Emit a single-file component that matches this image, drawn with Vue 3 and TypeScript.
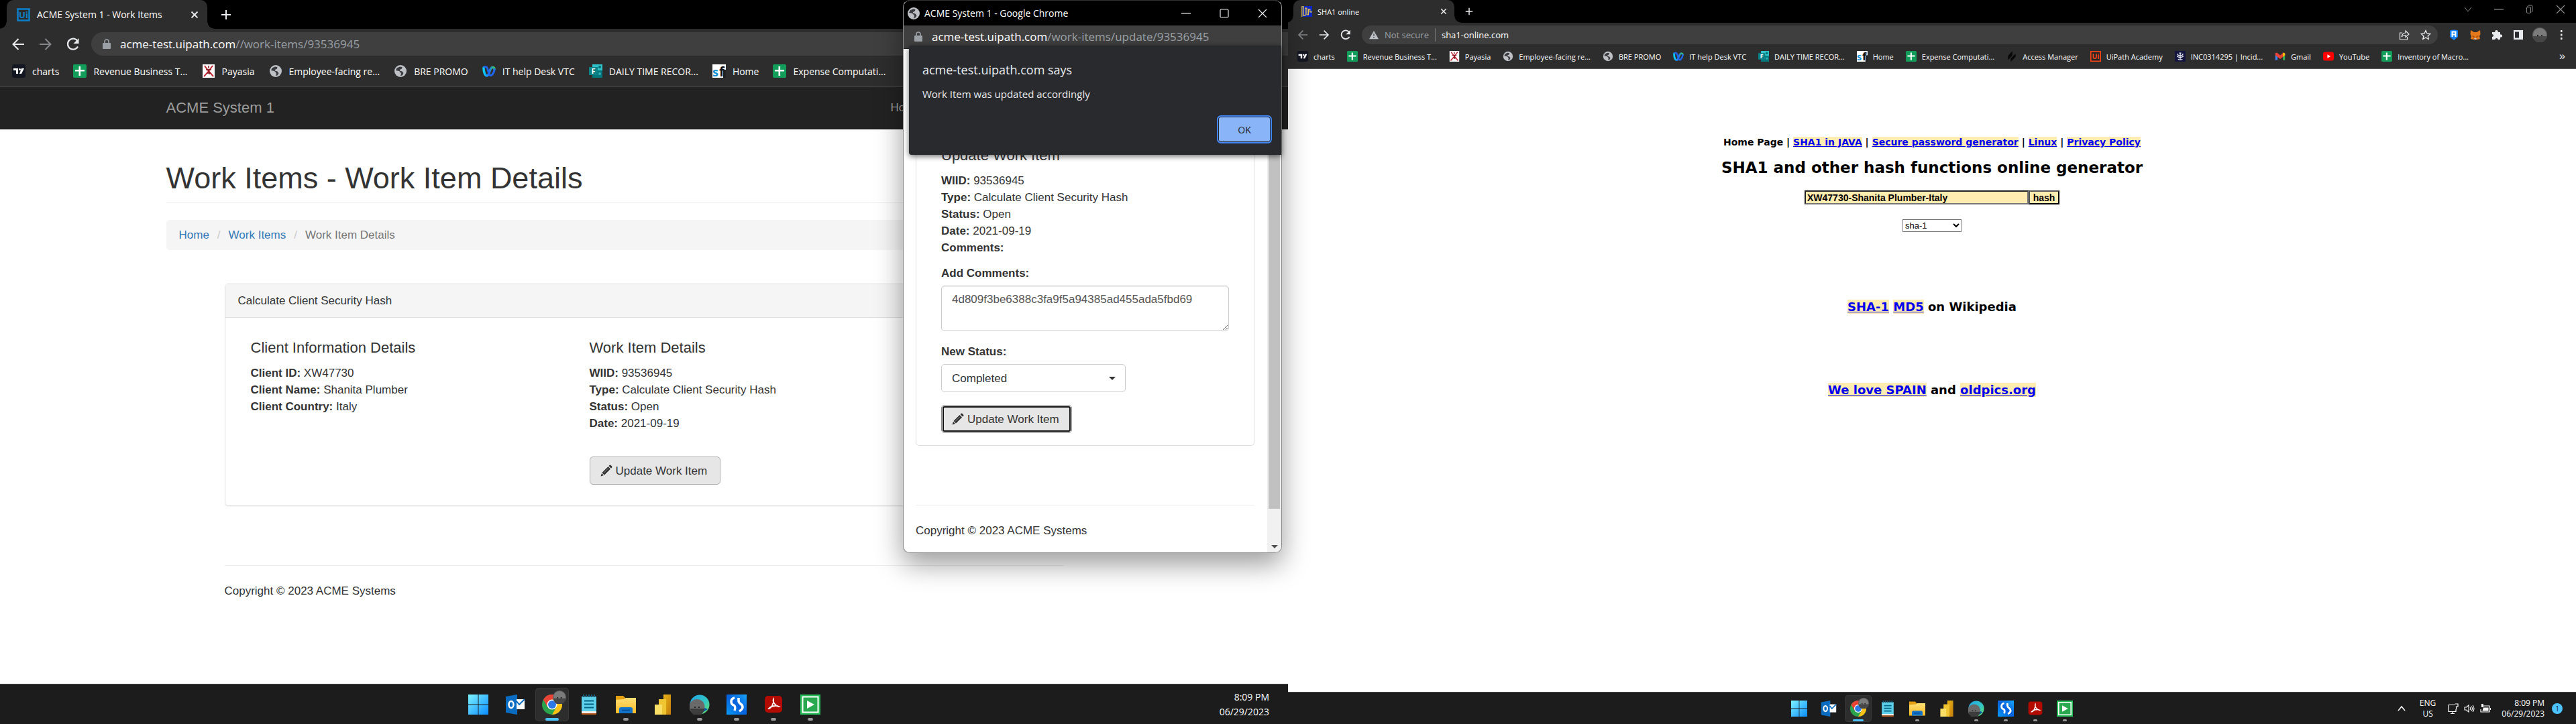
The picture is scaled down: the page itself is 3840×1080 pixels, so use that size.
<script setup lang="ts">
import { ref } from 'vue'

interface Item {
  icon: string
  label: string
}

interface App {
  icon: string
  name: string
  state: 'idle' | 'open' | 'active'
}

const bookmarks: Item[] = [
  { icon: 'charts', label: 'charts' },
  { icon: 'sheet', label: 'Revenue Business T...' },
  { icon: 'payasia', label: 'Payasia' },
  { icon: 'globe', label: 'Employee-facing re...' },
  { icon: 'globe', label: 'BRE PROMO' },
  { icon: 'webex', label: 'IT help Desk VTC' },
  { icon: 'forms', label: 'DAILY TIME RECOR...' },
  { icon: 'sf', label: 'Home' },
  { icon: 'sheet', label: 'Expense Computati...' },
]

const moreBookmarks: Item[] = [
  { icon: 'access', label: 'Access Manager' },
  { icon: 'academy', label: 'UiPath Academy' },
  { icon: 'crown', label: 'INC0314295 | Incid...' },
  { icon: 'gmail', label: 'Gmail' },
  { icon: 'youtube', label: 'YouTube' },
  { icon: 'sheet', label: 'Inventory of Macro...' },
]

const apps: App[] = [
  { icon: 'windows', name: 'Start', state: 'idle' },
  { icon: 'outlook', name: 'Outlook', state: 'idle' },
  { icon: 'chrome', name: 'Chrome', state: 'active' },
  { icon: 'notepad', name: 'Notepad', state: 'idle' },
  { icon: 'explorer', name: 'File Explorer', state: 'open' },
  { icon: 'powerbi', name: 'Power BI', state: 'idle' },
  { icon: 'edge', name: 'Edge', state: 'open' },
  { icon: 'studio', name: 'Studio', state: 'open' },
  { icon: 'acrobat', name: 'Acrobat', state: 'open' },
  { icon: 'assistant', name: 'Assistant', state: 'open' },
]

const comments = ref('4d809f3be6388c3fa9f5a94385ad455ada5fbd69')
const status = ref('Completed')
const plain = ref('XW47730-Shanita Plumber-Italy')
const algorithm = ref('sha-1')
</script>

<template>
  <svg class="paints" aria-hidden="true">
    <defs>
      <linearGradient id="g-win" x1="0" y1="0" x2="1" y2="1"><stop offset="0" stop-color="#7df3ff" /><stop offset="1" stop-color="#0a8cff" /></linearGradient>
      <linearGradient id="g-folder" x1="0" y1="0" x2="0" y2="1"><stop offset="0" stop-color="#ffdf74" /><stop offset="1" stop-color="#fdbb25" /></linearGradient>
      <linearGradient id="g-edge" x1="0" y1="0" x2="1" y2="1"><stop offset="0" stop-color="#1fa2e8" /><stop offset=".6" stop-color="#35c9c0" /><stop offset="1" stop-color="#6be04f" /></linearGradient>
      <linearGradient id="g-studio" x1="0" y1="1" x2="1" y2="0"><stop offset="0" stop-color="#0a9cf5" /><stop offset=".5" stop-color="#0560dd" /><stop offset="1" stop-color="#19a6fa" /></linearGradient>
      <linearGradient id="g-webex" x1="0" y1="0" x2="1" y2="0"><stop offset="0" stop-color="#0ad3ff" /><stop offset=".5" stop-color="#1f6dff" /><stop offset="1" stop-color="#39d45c" /></linearGradient>
      <linearGradient id="g-bi" x1="0" y1="0" x2="1" y2="1"><stop offset="0" stop-color="#e8b417" /><stop offset="1" stop-color="#c57d0c" /></linearGradient>
    </defs>
  </svg>
  <svg class="sprite" aria-hidden="true">
    <symbol id="i-charts" viewBox="0 0 20 20"><rect width="20" height="20" rx="3" fill="#131722" /><path d="M2 6h7v8H6V9H2zM14 6h4l-4 8h-3z" fill="#fff" /><circle cx="11.500" cy="7.500" r="1.500" fill="#fff" /></symbol>
    <symbol id="i-sheet" viewBox="0 0 20 20"><rect width="20" height="20" rx="2" fill="#129d5b" /><path d="M8.500 3h2.600v5H17v2.600h-5.900V17H8.500v-6.400H3V8h5.500z" fill="#fff" /></symbol>
    <symbol id="i-payasia" viewBox="0 0 20 20"><path d="M1 0h18v20H1z" fill="#fff" /><path d="M4 2c3 5 8 10 13 16M16 2C12 8 8 13 3 18" fill="none" stroke="#c32a35" stroke-width="2" /><path d="M10 2v4M6 8h8M8 13h5M10 9l1 6" stroke="#7f1722" stroke-width="1.500" /></symbol>
    <symbol id="i-globe" viewBox="0 0 20 20"><circle cx="10" cy="10" r="9" fill="#bdc1c6" /><path d="M9 3.500 4.500 5.500 3 9l5 1 2 2 1 2-1 3.500L13 16l1.500-3-2-2.500-3.500-1L9 8l3-1.500L12.500 4z" fill="#3a3b3e" /></symbol>
    <symbol id="i-webex" viewBox="0 0 20 20"><path d="M2 5c0 7 2 12 5 12s3-7 6-11c2-3 5-1 5 1" fill="none" stroke="url(#g-webex)" stroke-width="3.500" stroke-linecap="round" /><path d="M3 4c4-2 5 3 6 7s3 7 5 5c3-3 4-6 4-9" fill="none" stroke="#2165ee" stroke-width="3" stroke-linecap="round" /></symbol>
    <symbol id="i-forms" viewBox="0 0 20 20"><path d="M5 0h15v11H5z" fill="#2fc3c9" /><path d="M5 9h15v11H5z" fill="#04777d" /><circle cx="16" cy="4" r="2" fill="#096c72" /><circle cx="16" cy="14" r="2" fill="#32aeb5" /><path d="M0 4h13v12H0z" fill="#0c8288" /><text x="6.500" y="14" text-anchor="middle" font-size="11" font-weight="700" font-family="Open Sans, sans-serif" fill="#fff">F</text></symbol>
    <symbol id="i-sf" viewBox="0 0 20 20"><path d="M0 0h20v20H0z" fill="#fff" /><path d="M16 8h4v12h-4z" fill="#222" /><text x="0" y="18" font-size="18" font-weight="700" font-family="Open Sans, sans-serif" fill="#1291d6">s</text><text x="10" y="18" font-size="20" font-weight="700" font-family="Open Sans, sans-serif" fill="#101010">f</text></symbol>
    <symbol id="i-access" viewBox="0 0 20 20"><path d="M11 0 3 9v8l8-9zM17 5l-9 9v6l9-9z" fill="#080808" /></symbol>
    <symbol id="i-academy" viewBox="0 0 20 20"><path d="M1 1h18v18H1z" fill="#252525" stroke="#fa4616" stroke-width="2" /><text x="10" y="15" text-anchor="middle" font-size="13" font-weight="700" font-family="Open Sans, sans-serif" fill="#fa4616">Ui</text></symbol>
    <symbol id="i-crown" viewBox="0 0 20 20"><path d="M0 0h20v20H0z" fill="#14163f" /><path d="M10 3v14M5 5c0 5 10 5 10 0M4 9c2 4 10 4 12 0M6 15c1 2 7 2 8 0M8 4h4" fill="none" stroke="#eceef8" stroke-width="1.600" /></symbol>
    <symbol id="i-gmail" viewBox="0 0 20 20"><path d="M1 4h4v13H1z" fill="#4285f4" /><path d="M15 4h4v13h-4z" fill="#34a853" /><path d="m1 4 3-1 6 5 6-5 3 1v4l-9 7-9-7z" fill="#ea4335" /><path d="m15 4 2-1 2 2v3l-4 3z" fill="#fbbc04" /></symbol>
    <symbol id="i-youtube" viewBox="0 0 20 20"><rect y="2" width="20" height="16" rx="4" fill="#f00" /><path d="m8 6.500 6 3.500-6 3.500z" fill="#fff" /></symbol>

    <symbol id="i-uipath" viewBox="0 0 20 20"><path d="M1.500 1.500h17v17h-17z" fill="#2b2c2e" stroke="#0b80c9" stroke-width="2.500" /><text x="10" y="15" text-anchor="middle" font-size="13" font-weight="700" font-family="Open Sans, sans-serif" fill="#0b84cf">Ui</text></symbol>
    <symbol id="i-wave" viewBox="0 0 20 20"><path d="M1 0h19v20H1z" fill="#0b28c4" /><path d="M1 20V1h3v17h3V4h3v12h3V6h3v5h4" fill="none" stroke="#e8c548" stroke-width="1.500" /></symbol>

    <symbol id="i-back" viewBox="0 0 20 20"><path d="M19 10H3M10.500 2 2.500 10l8 8" fill="none" stroke="currentColor" stroke-width="2" /></symbol>
    <symbol id="i-forward" viewBox="0 0 20 20"><path d="M1 10h16M9.500 2l8 8-8 8" fill="none" stroke="currentColor" stroke-width="2" /></symbol>
    <symbol id="i-reload" viewBox="0 0 20 20"><path d="M17 13.500A8 8 0 1 1 16.500 5" fill="none" stroke="currentColor" stroke-width="2.200" /><path d="M18.500 1v8h-8z" fill="currentColor" /></symbol>
    <symbol id="i-lock" viewBox="0 0 12 16"><path d="M1 6h10q1 0 1 1v7q0 1-1 1H1q-1 0-1-1V7q0-1 1-1z" fill="currentColor" /><path d="M3 7V4a3 3 0 0 1 6 0v3" fill="none" stroke="currentColor" stroke-width="1.600" /></symbol>
    <symbol id="i-warning" viewBox="0 0 16 16"><path d="m8 1 8 14H0z" fill="currentColor" /><path d="M8 6v4M8 11.500v2" stroke="#3c3c3c" stroke-width="1.500" /></symbol>
    <symbol id="i-close" viewBox="0 0 12 12"><path d="m1.500 1.500 9 9M10.500 1.500l-9 9" stroke="currentColor" stroke-width="1.800" /></symbol>
    <symbol id="i-thin-close" viewBox="0 0 14 14"><path d="m1 1 12 12M13 1 1 13" stroke="currentColor" stroke-width="1.200" /></symbol>
    <symbol id="i-minimise" viewBox="0 0 14 14"><path d="M0 7h14" stroke="currentColor" stroke-width="1.200" /></symbol>
    <symbol id="i-maximise" viewBox="0 0 14 14"><rect x="1" y="1" width="12" height="12" rx="1.500" fill="none" stroke="currentColor" stroke-width="1.200" /></symbol>
    <symbol id="i-restore" viewBox="0 0 14 14"><path d="M4 3V2.500Q4 1 5.500 1h4Q11 1 11 2.500v7Q11 11 9.500 11" fill="none" stroke="currentColor" /><rect x="2.500" y="3.500" width="6" height="9" rx="1.500" fill="none" stroke="currentColor" /></symbol>
    <symbol id="i-down" viewBox="0 0 14 14"><path d="m2 4 5 6 5-6" fill="none" stroke="currentColor" /></symbol>
    <symbol id="i-up" viewBox="0 0 14 14"><path d="m2 10 5-6 5 6" fill="none" stroke="currentColor" stroke-width="1.500" /></symbol>
    <symbol id="i-plus" viewBox="0 0 16 16"><path d="M8 1v14M1 8h14" stroke="currentColor" stroke-width="2" /></symbol>
    <symbol id="i-share" viewBox="0 0 16 16"><path d="M5 5H1.500v10h11v-4M4 11c1-5 4-6 6-6V2l5 5-5 4.500V8.500c-3 0-5 1-6 2.500z" fill="none" stroke="currentColor" stroke-width="1.200" /></symbol>
    <symbol id="i-star" viewBox="0 0 16 16"><path d="m8 1.500 2 4.500 4.800.5-3.600 3.200 1 4.800L8 12l-4.200 2.500 1-4.800L1.200 6.500 6 6z" fill="none" stroke="currentColor" stroke-width="1.300" /></symbol>
    <symbol id="i-ronin" viewBox="0 0 16 16"><path d="M2 1.500Q8-.5 14 1.500V11L8 16l-6-5z" fill="#1680f5" /><path d="M5.500 11V3.500h5v4h-5M10.500 7.500V11" fill="none" stroke="#fff" stroke-width="2" /></symbol>
    <symbol id="i-fox" viewBox="0 0 16 16"><path d="m1 1 5 3h4l5-3 .5 6-1.500 3 1 4-4 1H5l-4-1 1-4L.5 7z" fill="#e57a1d" /><path d="m3 9 4 1-1 3zM13 9l-4 1 1 3z" fill="#a84f12" /><path d="M6 13h4l-1 2H7z" fill="#d6c0b3" /></symbol>
    <symbol id="i-puzzle" viewBox="0 0 16 16"><path d="M1 4h4.500a2.200 2.200 0 1 1 4 0H13v3.500a2.200 2.200 0 1 1 0 4V15H9.500a2 2 0 1 0-4 0H1v-4a2 2 0 1 0 0-4z" fill="currentColor" /></symbol>
    <symbol id="i-panel" viewBox="0 0 16 16"><path d="M1 1h14v14H1z" fill="#e8eaed" /><path d="M3 3.500h6v9H3z" fill="#29292b" /></symbol>
    <symbol id="i-avatar" viewBox="0 0 22 22"><circle cx="11" cy="11" r="11" fill="#5d5d5d" /><circle cx="11" cy="11" r="10" fill="#7b7b7b" /><path d="M1 13h20a10 10 0 0 1-20 0z" fill="#474747" /><path d="M7 12h2M13 12h2" stroke="#222" stroke-width="2" /></symbol>
    <symbol id="i-dots" viewBox="0 0 16 16"><path d="M7 1h2.500v3H7zM7 6.500h2.500v3H7zM7 12h2.500v3H7z" fill="currentColor" /></symbol>
    <symbol id="i-pencil" viewBox="0 0 18 18"><path d="m11.500 3 3.500 3.500L6 15.500 2.500 12zM12.500 2l1-1q1-1 2 0l1.500 1.500q1 1 0 2l-1 1zM2 13l3 3-4.500 1.500z" fill="#2e2e2e" /><path d="m5 12.500 7-7" stroke="#9b9b9b" /></symbol>

    <symbol id="i-windows" viewBox="0 0 30 30"><path d="M0 0h14.500v14.500H0zM15.500 0H30v14.500H15.500zM0 15.500h14.500V30H0zM15.500 15.500H30V30H15.500z" fill="url(#g-win)" /></symbol>
    <symbol id="i-outlook" viewBox="0 0 30 30"><path d="M1 3 18 0v30L1 27z" fill="#0a6cc0" /><path d="M17 7h12v15H17z" fill="#fff" /><path d="m17 10 4 5 8-8" fill="none" stroke="#0a6cc0" stroke-width="2" /><ellipse cx="9" cy="15" rx="3.500" ry="5" fill="none" stroke="#fff" stroke-width="2.500" /></symbol>
    <symbol id="i-chrome" viewBox="0 0 30 30"><circle cx="15" cy="15" r="15" fill="#2ba24c" /><path d="M2 7.500a15 15 0 0 1 26 0H15L8.500 18.800z" fill="#ea4335" /><path d="M28 7.500A15 15 0 0 1 15 30l6.500-11.200L22 7.500z" fill="#fbc116" /><path d="M2 7.500 8.500 18.800 15 15V7.500z" fill="#ea4335" /><circle cx="15" cy="15" r="7.500" fill="#fff" /><circle cx="15" cy="15" r="6" fill="#2b79e8" /></symbol>
    <symbol id="i-notepad" viewBox="0 0 30 30"><path d="M4 3h22v23H4z" fill="#5fd0ea" /><path d="M4 25h22v3H4z" fill="#f2efea" /><path d="M4 28h22v2H4z" fill="#b4571a" /><path d="M7 0v4M11 0v4M15 0v4M19 0v4M23 0v4" stroke="#1a5e78" stroke-width="2" /><path d="M8 9.500h14M8 14.500h14M8 19.500h14" stroke="#046588" stroke-width="2" /></symbol>
    <symbol id="i-explorer" viewBox="0 0 30 30"><path d="M0 2h11l3 3v8H0z" fill="#e5a012" /><path d="M0 8 12 7l3-2h15v23H0z" fill="url(#g-folder)" /><path d="M5 28v-6q0-3 3-3h14q3 0 3 3v6z" fill="#1173ca" /><path d="M9 23.500h12" stroke="#084b8c" stroke-width="1.500" /></symbol>
    <symbol id="i-powerbi" viewBox="0 0 30 30"><path d="M16 0h11v30H16z" fill="url(#g-bi)" /><path d="M9 7h11v23H9z" fill="#efc632" /><path d="M3 15h11v15H3z" fill="#f9df66" /></symbol>
    <symbol id="i-edge" viewBox="0 0 30 30"><circle cx="15" cy="15" r="14.500" fill="url(#g-edge)" /><path d="M5 25q10 6 22-3l-4-2z" fill="#0c58a8" /><circle cx="11" cy="18.500" r="11.500" fill="#6a6a6a" /><path d="M1 21h21a10 10 0 0 1-21 0z" fill="#3d3d3d" /><path d="M7 19h2M13 19h2" stroke="#222" stroke-width="2" /></symbol>
    <symbol id="i-studio" viewBox="0 0 30 30"><path d="M0 0h30v30H0z" fill="url(#g-studio)" /><path d="M12 5q-5 1-5 5.500T11 16q3 2 1 8M18 5v4q0 3 3 5t3 5-5 6" fill="none" stroke="#fff" stroke-width="3.500" /></symbol>
    <symbol id="i-acrobat" viewBox="0 0 30 30"><rect x="2" y="2" width="26" height="25" rx="5" fill="#b30b00" /><path d="M8 21c3 0 8-7 7-14-2 4 4 11 8 11-3-2-12-1-15 3z" fill="none" stroke="#fff" stroke-width="1.800" /></symbol>
    <symbol id="i-assistant" viewBox="0 0 30 30"><path d="M0 0h30v30H0z" fill="#26bc57" /><path d="M3.500 3.500h23v23h-23z" fill="#28a950" stroke="#fff" stroke-width="2" /><path d="m10 9 11 6-11 6z" fill="#fff" /></symbol>
    <symbol id="i-monitor" viewBox="0 0 16 16"><path d="M11 2.500H1v10h11V9M4 15.500h6M7 12.500v3M11 1h4v4h-2.500v4" fill="none" stroke="currentColor" stroke-width="1.200" /></symbol>
    <symbol id="i-sound" viewBox="0 0 16 16"><path d="M1 6h2.500L7 3v10l-3.500-3H1zM9 6q1.500 2 0 4M11 4.500q3 3.500 0 7M13 3q4 5 0 10" fill="none" stroke="currentColor" stroke-width="1.100" /></symbol>
    <symbol id="i-battery" viewBox="0 0 16 16"><path d="M5 4h9v9H1V9" fill="none" stroke="currentColor" stroke-width="1.200" /><path d="M5 6.500h7.500v5H3.500zM15 7h1v3h-1zM2 1h3v5H2z" fill="currentColor" /></symbol>
  </svg>

  <main class="desktop">
    <section class="screen screen-large">
      <div class="tab-strip">
        <div class="tab">
          <svg class="ico"><use href="#i-uipath" /></svg>
          <span class="tab-title">ACME System 1 - Work Items</span>
          <button class="bare" aria-label="Close tab"><svg class="ico-close"><use href="#i-close" /></svg></button>
        </div>
        <button class="bare new-tab" aria-label="New tab"><svg class="ico-plus"><use href="#i-plus" /></svg></button>
      </div>
      <div class="toolbar">
        <button class="bare" aria-label="Back"><svg class="ico"><use href="#i-back" /></svg></button>
        <button class="bare off" aria-label="Forward"><svg class="ico"><use href="#i-forward" /></svg></button>
        <button class="bare" aria-label="Reload"><svg class="ico"><use href="#i-reload" /></svg></button>
        <div class="address">
          <svg class="ico-lock"><use href="#i-lock" /></svg>
          <span class="url"><b>acme-test.uipath.com</b>//work-items/93536945</span>
        </div>
      </div>
      <nav class="bookmarks" aria-label="Bookmarks">
        <a v-for="b in bookmarks" :key="b.label" href="#" class="bookmark"><svg class="ico"><use :href="'#i-' + b.icon" /></svg>{{ b.label }}</a>
      </nav>

      <header class="navbar">
        <div class="container navbar-row">
          <a href="#" class="brand">ACME System 1</a>
          <nav class="navbar-links"><a href="#">Home</a></nav>
        </div>
      </header>
      <div class="container page">
        <h1>Work Items - Work Item Details</h1>
        <nav class="breadcrumb" aria-label="Breadcrumb">
          <a href="#">Home</a><i>/</i><a href="#">Work Items</a><i>/</i><span>Work Item Details</span>
        </nav>
        <div class="narrow">
          <section class="panel">
            <div class="panel-heading">Calculate Client Security Hash</div>
            <div class="panel-body">
              <div class="column">
                <h4>Client Information Details</h4>
                <p><b>Client ID:</b> XW47730</p>
                <p><b>Client Name:</b> Shanita Plumber</p>
                <p><b>Client Country:</b> Italy</p>
              </div>
              <div class="column">
                <h4>Work Item Details</h4>
                <p><b>WIID:</b> 93536945</p>
                <p><b>Type:</b> Calculate Client Security Hash</p>
                <p><b>Status:</b> Open</p>
                <p><b>Date:</b> 2021-09-19</p>
                <button class="btn btn-spaced"><svg class="ico-pencil"><use href="#i-pencil" /></svg>Update Work Item</button>
              </div>
            </div>
          </section>
          <footer class="copyright">Copyright © 2023 ACME Systems</footer>
        </div>
      </div>

      <footer class="taskbar">
        <div></div>
        <div class="apps">
          <button v-for="a in apps" :key="a.name" class="app" :class="a.state" :aria-label="a.name">
            <svg class="ico-app"><use :href="'#i-' + a.icon" /></svg>
            <svg v-if="a.icon === 'chrome'" class="app-badge"><use href="#i-avatar" /></svg>
          </button>
        </div>
        <div class="tray"><div class="clock">8:09 PM<br />06/29/2023</div></div>
      </footer>

      <section class="popup">
        <div class="popup-title">
          <svg class="ico"><use href="#i-globe" /></svg>
          <span>ACME System 1 - Google Chrome</span>
          <div class="popup-controls">
            <button class="bare" aria-label="Minimise"><svg class="ico-win"><use href="#i-minimise" /></svg></button>
            <button class="bare" aria-label="Maximise"><svg class="ico-win"><use href="#i-maximise" /></svg></button>
            <button class="bare" aria-label="Close"><svg class="ico-win"><use href="#i-thin-close" /></svg></button>
          </div>
        </div>
        <div class="popup-address">
          <svg class="ico-lock"><use href="#i-lock" /></svg>
          <span class="url"><b>acme-test.uipath.com</b>/work-items/update/93536945</span>
        </div>
        <div class="popup-body">
          <div class="popup-page">
            <form class="update" @submit.prevent>
              <h4>Update Work Item</h4>
              <p><b>WIID:</b> 93536945</p>
              <p><b>Type:</b> Calculate Client Security Hash</p>
              <p><b>Status:</b> Open</p>
              <p><b>Date:</b> 2021-09-19</p>
              <p><b>Comments:</b></p>
              <label for="comments">Add Comments:</label>
              <textarea id="comments" v-model="comments"></textarea>
              <label for="status">New Status:</label>
              <div class="picker">
                <select id="status" v-model="status"><option>Open</option><option>Completed</option></select>
              </div>
              <button class="btn btn-focus"><svg class="ico-pencil"><use href="#i-pencil" /></svg>Update Work Item</button>
            </form>
            <footer class="copyright">Copyright © 2023 ACME Systems</footer>
          </div>
          <div class="scrollbar"><div class="thumb"></div><div class="arrow"></div></div>
        </div>
        <div class="alert" role="alertdialog" aria-labelledby="alert-title">
          <div id="alert-title" class="alert-title">acme-test.uipath.com says</div>
          <div class="alert-text">Work Item was updated accordingly</div>
          <button class="ok">OK</button>
        </div>
      </section>
    </section>

    <section class="screen screen-small">
      <div class="tab-strip">
        <div class="tab">
          <svg class="ico"><use href="#i-wave" /></svg>
          <span class="tab-title">SHA1 online</span>
          <button class="bare" aria-label="Close tab"><svg class="ico-close"><use href="#i-close" /></svg></button>
        </div>
        <button class="bare new-tab" aria-label="New tab"><svg class="ico-plus"><use href="#i-plus" /></svg></button>
        <div class="window-controls">
          <button class="bare" aria-label="Search tabs"><svg class="ico-win"><use href="#i-down" /></svg></button>
          <button class="bare" aria-label="Minimise"><svg class="ico-win"><use href="#i-minimise" /></svg></button>
          <button class="bare" aria-label="Restore"><svg class="ico-win"><use href="#i-restore" /></svg></button>
          <button class="bare" aria-label="Close"><svg class="ico-win"><use href="#i-thin-close" /></svg></button>
        </div>
      </div>
      <div class="toolbar">
        <button class="bare off" aria-label="Back"><svg class="ico"><use href="#i-back" /></svg></button>
        <button class="bare" aria-label="Forward"><svg class="ico"><use href="#i-forward" /></svg></button>
        <button class="bare" aria-label="Reload"><svg class="ico"><use href="#i-reload" /></svg></button>
        <div class="address">
          <svg class="ico-warning"><use href="#i-warning" /></svg>
          <span class="insecure">Not secure</span>
          <span class="url"><b>sha1-online.com</b></span>
          <div class="address-actions">
            <button class="bare" aria-label="Share"><svg class="ico"><use href="#i-share" /></svg></button>
            <button class="bare" aria-label="Bookmark"><svg class="ico"><use href="#i-star" /></svg></button>
          </div>
        </div>
        <button class="bare" aria-label="Ronin"><svg class="ico"><use href="#i-ronin" /></svg></button>
        <button class="bare" aria-label="MetaMask"><svg class="ico"><use href="#i-fox" /></svg></button>
        <button class="bare" aria-label="Extensions"><svg class="ico"><use href="#i-puzzle" /></svg></button>
        <button class="bare" aria-label="Side panel"><svg class="ico"><use href="#i-panel" /></svg></button>
        <button class="bare profile" aria-label="Profile"><svg class="ico-avatar"><use href="#i-avatar" /></svg></button>
        <button class="bare" aria-label="Menu"><svg class="ico"><use href="#i-dots" /></svg></button>
      </div>
      <nav class="bookmarks" aria-label="Bookmarks">
        <a v-for="b in [...bookmarks, ...moreBookmarks]" :key="b.label" href="#" class="bookmark"><svg class="ico"><use :href="'#i-' + b.icon" /></svg>{{ b.label }}</a>
        <button class="bare overflow">»</button>
      </nav>

      <div class="hash-page">
        <nav class="hash-nav">Home Page | <a href="#">SHA1 in JAVA</a> | <a href="#">Secure password generator</a> | <a href="#">Linux</a> | <a href="#">Privacy Policy</a></nav>
        <h2>SHA1 and other hash functions online generator</h2>
        <form class="hash-form" @submit.prevent>
          <div class="hash-row"><input v-model="plain" type="text" aria-label="Text to hash" /><button>hash</button></div>
          <select v-model="algorithm" aria-label="Algorithm"><option>md5</option><option>sha-1</option><option>sha-256</option></select>
        </form>
        <p class="hash-line"><a href="#">SHA-1</a> <a href="#">MD5</a> on Wikipedia</p>
        <p class="hash-line"><a href="#">We love SPAIN</a> and <a href="#">oldpics.org</a></p>
      </div>

      <footer class="taskbar">
        <div></div>
        <div class="apps">
          <button v-for="a in apps" :key="a.name" class="app" :class="a.state" :aria-label="a.name">
            <svg class="ico-app"><use :href="'#i-' + a.icon" /></svg>
            <svg v-if="a.icon === 'chrome'" class="app-badge"><use href="#i-avatar" /></svg>
          </button>
        </div>
        <div class="tray">
          <svg class="ico-win"><use href="#i-up" /></svg>
          <div class="language">ENG<br />US</div>
          <div class="system">
            <svg class="ico"><use href="#i-monitor" /></svg>
            <svg class="ico"><use href="#i-sound" /></svg>
            <svg class="ico"><use href="#i-battery" /></svg>
          </div>
          <div class="clock">8:09 PM<br />06/29/2023</div>
          <span class="count">1</span>
        </div>
      </footer>
    </section>
  </main>
</template>

<style>
body {
  background: #fff;
}
</style>

<style scoped>
* {
  box-sizing: border-box;
}
svg {
  display: block;
  flex: none;
}
.paints {
  position: absolute;
  width: 0;
  height: 0;
}
.sprite {
  display: none;
}
.desktop {
  display: flex;
  min-height: 100vh;
  overflow: hidden;
}
.screen {
  position: relative;
  display: flex;
  flex-direction: column;
  flex: 1 1 0;
  min-width: 0;
  background: #fff;
  font-family: "Open Sans", "Noto Sans", sans-serif;
}
.screen-large {
  --ico: 20px;
  --ui: 14px;
  --url: 17px;
  --strip: 43px;
  --tab: 299px;
  --pill: 35px;
  --gap: 21px;
  --task: 60px;
  --slot: 50px;
  --app: 30px;
  z-index: 1;
}
.screen-small {
  --ico: 16px;
  --ui: 11px;
  --url: 13px;
  --strip: 34px;
  --tab: 240px;
  --pill: 28px;
  --gap: 18px;
  --task: 48px;
  --slot: 40px;
  --app: 24px;
}
.bare {
  display: block;
  padding: 0;
  border: 0;
  background: none;
  color: #e8eaed;
}
.off {
  color: #85878a;
}
.ico {
  width: var(--ico);
  height: var(--ico);
}
.ico-app {
  width: var(--app);
  height: var(--app);
}
.ico-lock {
  width: 12px;
  height: 16px;
  color: #9aa0a6;
}
.ico-warning {
  width: 14px;
  height: 14px;
  color: #bdc1c6;
}
.ico-win {
  width: 14px;
  height: 14px;
}
.ico-pencil {
  width: 18px;
  height: 18px;
}
.ico-avatar {
  width: 22px;
  height: 22px;
}

/* Browser chrome */
.tab-strip {
  display: flex;
  align-items: center;
  height: var(--strip);
  background: #000;
}
.tab {
  position: relative;
  display: flex;
  align-items: center;
  gap: 10px;
  width: var(--tab);
  height: 100%;
  margin-left: 10px;
  padding: 0 13px 0 15px;
  border-radius: 10px 10px 0 0;
  background: #2d2d2d;
}
.screen-small .tab {
  gap: 8px;
  margin-left: 8px;
  padding: 0 11px 0 12px;
}
.tab::before,
.tab::after {
  content: "";
  position: absolute;
  bottom: 0;
  width: 10px;
  height: 10px;
}
.tab::before {
  right: 100%;
  background: radial-gradient(circle at 0 0, #000 9px, #2d2d2d 10px);
}
.tab::after {
  left: 100%;
  background: radial-gradient(circle at 100% 0, #000 9px, #2d2d2d 10px);
}
.tab-title {
  flex: 1;
  color: #fff;
  font-size: var(--ui);
  white-space: nowrap;
}
.ico-close {
  width: 12px;
  height: 12px;
}
.ico-plus {
  width: 16px;
  height: 16px;
}
.screen-small .ico-close {
  width: 10px;
  height: 10px;
}
.screen-small .ico-plus {
  width: 12px;
  height: 12px;
}
.new-tab {
  margin-left: 20px;
}
.screen-small .new-tab {
  margin-left: 16px;
}
.window-controls {
  display: flex;
  gap: 32px;
  margin: 0 16px 6px auto;
}
.window-controls .bare {
  color: #8a8a8a;
}
.toolbar {
  display: flex;
  align-items: center;
  gap: 21px;
  padding: 5px 0 5px 17px;
  background: #2d2d2d;
}
.screen-small .toolbar {
  gap: 16px;
  padding: 4px 14px;
}
.address {
  display: flex;
  flex: 1;
  align-items: center;
  gap: 14px;
  height: var(--pill);
  padding-left: 17px;
  border-radius: 18px 0 0 18px;
  background: #3f3f3f;
}
.screen-large .address {
  margin-left: -4px;
}
.screen-small .address {
  gap: 9px;
  padding: 0 10px 0 11px;
  border-radius: 14px;
}
.url {
  color: #9aa0a6;
  font-size: var(--url);
  line-height: 24px;
  white-space: nowrap;
}
.url b {
  color: #fff;
  font-weight: 400;
}
.insecure {
  padding-right: 9px;
  border-right: 1px solid #777;
  color: #9aa0a6;
  font-size: var(--url);
  line-height: 20px;
}
.address-actions {
  display: flex;
  gap: 16px;
  margin-left: auto;
}
.profile {
  margin: 0 -3px;
}
.bookmarks {
  display: flex;
  align-items: center;
  gap: var(--gap);
  height: 41px;
  padding: 0 0 4px 18px;
  border-bottom: 1px solid #5a5a5a;
  background: #2d2d2d;
  overflow: hidden;
}
.screen-small .bookmarks {
  height: 33px;
  padding: 0 16px 4px 14px;
}
.bookmark {
  display: flex;
  align-items: center;
  gap: 10px;
  color: #fff;
  font-size: var(--ui);
  text-decoration: none;
  white-space: nowrap;
}
.screen-small .bookmark {
  gap: 8px;
}
.overflow {
  margin-left: auto;
  font-size: 16px;
  line-height: 16px;
}

/* Work item site */
.container {
  width: 100%;
  max-width: 1425px;
  margin: 0 auto;
}
.navbar {
  border-bottom: 1px solid #080808;
  background: #222;
}
.navbar-row {
  display: flex;
  align-items: center;
  justify-content: space-between;
  height: 63px;
  font-family: "Liberation Sans", sans-serif;
}
.navbar-row a {
  color: #9d9d9d;
  text-decoration: none;
}
.brand {
  font-size: 22px;
}
.navbar-links {
  width: 345px;
  font-size: 17px;
}
.page,
.popup-page {
  color: #333;
  font-family: "Liberation Sans", sans-serif;
  font-size: 17px;
  line-height: 25px;
}
h1 {
  margin: 0 0 25px;
  padding: 48px 0 11px;
  border-bottom: 1px solid #eee;
  font-size: 45px;
  font-weight: 400;
  line-height: 50px;
}
h4 {
  margin: 0 0 13px;
  font-size: 22px;
  font-weight: 400;
  line-height: 25px;
}
p {
  margin: 0;
}
.breadcrumb {
  display: flex;
  padding: 10px 19px;
  border-radius: 5px;
  background: #f5f5f5;
}
.breadcrumb a {
  color: #337ab7;
  text-decoration: none;
}
.breadcrumb i {
  padding: 0 12px;
  color: #ccc;
  font-style: normal;
}
.breadcrumb span {
  color: #777;
}
.narrow {
  margin: 50px 87px 0;
}
.panel {
  border: 1px solid #ddd;
  border-radius: 5px;
  box-shadow: 0 1px 1px rgba(0, 0, 0, 0.05);
}
.panel-heading {
  padding: 12px 19px;
  border-bottom: 1px solid #ddd;
  background: #f5f5f5;
}
.panel-body {
  display: flex;
  padding: 32px 38px 31px;
}
.column {
  width: 505px;
}
.btn {
  display: flex;
  align-items: center;
  gap: 5px;
  width: 195px;
  height: 42px;
  padding: 0 15px;
  border: 1px solid #adadad;
  border-radius: 5px;
  background: #e6e6e6;
  color: #333;
  font: inherit;
  white-space: nowrap;
}
.btn-spaced {
  margin-top: 37px;
}
.btn-focus {
  border-color: #8c8c8c;
  box-shadow: inset 0 0 0 1px #fff, inset 0 0 0 3px #101010;
}
.copyright {
  margin-top: 88px;
  padding-top: 25px;
  border-top: 1px solid #eee;
}

/* Update window */
.popup {
  position: absolute;
  top: 0;
  right: 9px;
  display: flex;
  flex-direction: column;
  width: 565px;
  height: 825px;
  border: 1px solid #8d8d8d;
  border-top-color: #333;
  border-radius: 10px;
  background: #fff;
  box-shadow: 0 16px 40px rgba(0, 0, 0, 0.4);
}
.popup-title {
  display: flex;
  align-items: center;
  gap: 6px;
  height: 37px;
  padding-left: 5px;
  border-radius: 9px 9px 0 0;
  background: #000;
  color: #fff;
  font-size: 14px;
}
.popup-controls {
  display: flex;
  gap: 43px;
  margin: 0 21px 0 auto;
}
.popup-address {
  display: flex;
  align-items: center;
  gap: 14px;
  height: 35px;
  padding-left: 16px;
  border-bottom: 1px solid #222;
  background: #3f3f3f;
}
.popup-body {
  display: flex;
  flex: 1;
  min-height: 0;
  border-radius: 0 0 9px 9px;
  overflow: hidden;
}
.popup-page {
  flex: 1;
  padding: 0 19px 0 18px;
}
.update {
  padding: 146px 37px 18px;
  border: 1px solid #ddd;
  border-top: 0;
  border-radius: 0 0 5px 5px;
}
.update label {
  display: block;
  margin: 13px 0 6px;
  font-weight: 700;
}
.update textarea {
  display: block;
  width: 100%;
  height: 68px;
  padding: 7px 15px;
  border: 1px solid #ccc;
  border-radius: 5px;
  box-shadow: inset 0 1px 1px rgba(0, 0, 0, 0.08);
  color: #555;
  font: inherit;
  resize: both;
}
.update textarea + label {
  margin-top: 18px;
}
.picker {
  position: relative;
  width: 275px;
}
.picker::after {
  content: "";
  position: absolute;
  top: 19px;
  right: 15px;
  border: 5px solid transparent;
  border-top-color: #333;
  border-bottom: 0;
}
.picker select {
  display: block;
  width: 100%;
  height: 42px;
  padding: 0 15px;
  border: 1px solid #ccc;
  border-radius: 5px;
  background: #fff;
  color: #333;
  font: inherit;
  appearance: none;
}
.btn-focus {
  margin-top: 19px;
}
.scrollbar {
  display: flex;
  flex-direction: column;
  align-items: center;
  width: 21px;
  background: #f1f1f1;
}
.thumb {
  width: 17px;
  height: 686px;
  background: #c1c1c1;
}
.arrow {
  margin-top: 54px;
  border: 5px solid transparent;
  border-top-color: #505050;
  border-bottom: 0;
}
.alert {
  position: absolute;
  top: 67px;
  right: 0;
  left: 8px;
  display: flex;
  flex-direction: column;
  height: 163px;
  padding: 24px 14px 17px 20px;
  border-radius: 4px 0 0 4px;
  background: #292a2d;
  box-shadow: 0 2px 8px rgba(0, 0, 0, 0.6);
  color: #e8eaed;
}
.alert-title {
  font-size: 18px;
  line-height: 25px;
}
.alert-text {
  margin-top: 13px;
  font-size: 15px;
  line-height: 20px;
}
.ok {
  align-self: flex-end;
  width: 82px;
  height: 42px;
  margin-top: auto;
  border: 2px solid #4285f4;
  border-radius: 6px;
  background: #8ab4f8;
  box-shadow: inset 0 0 0 1px #202124;
  color: #202124;
  font: 14px "Open Sans", sans-serif;
}

/* Hash site */
.hash-page {
  display: flex;
  flex-direction: column;
  align-items: center;
  padding-top: 99px;
  color: #000;
  font-family: "DejaVu Sans", sans-serif;
  font-weight: 700;
}
.hash-page a {
  background: #ffecb0;
  color: #00e;
}
.hash-nav {
  font-size: 14px;
  line-height: 20px;
}
.hash-page h2 {
  margin: 14px 0 20px;
  font-size: 23px;
  line-height: 28px;
}
.hash-form {
  display: flex;
  flex-direction: column;
  align-items: center;
  gap: 22px;
}
.hash-row {
  display: flex;
}
.hash-row input,
.hash-row button {
  height: 21px;
  padding: 0 2px;
  border: 2px solid;
  border-radius: 0;
  background: #ffecb0;
  color: #000;
  font: 700 14px "Liberation Sans", sans-serif;
}
.hash-row input {
  width: 334px;
  border-color: #222 #767676 #767676 #222;
}
.hash-row button {
  width: 46px;
  border-color: #555 #000 #000 #555;
}
.hash-form select {
  width: 90px;
  height: 19px;
  border: 1px solid #767676;
  border-radius: 2px;
  background: #fff;
  color: #000;
  font: 13px "Liberation Sans", sans-serif;
}
.hash-line {
  margin-top: 100px;
  font-size: 18px;
  line-height: 24px;
}

/* Taskbar */
.taskbar {
  display: grid;
  grid-template-columns: 1fr auto 1fr;
  align-items: center;
  height: var(--task);
  margin-top: auto;
  border-top: 1px solid #484848;
  background: #1c1c1c;
}
.apps {
  display: flex;
  gap: 5px;
}
.screen-small .apps {
  gap: 4px;
}
.app {
  position: relative;
  display: flex;
  align-items: center;
  justify-content: center;
  width: var(--slot);
  height: var(--slot);
  padding: 0;
  border: 0;
  border-radius: 5px;
  background: none;
}
.active {
  background: #2d2d2d;
  box-shadow: inset 0 0 0 1px #383838;
}
.open::after,
.active::after {
  content: "";
  position: absolute;
  bottom: 1px;
  width: 8px;
  height: 4px;
  border-radius: 2px;
  background: #9a9a9a;
}
.active::after {
  width: 20px;
  background: #4cc2ff;
}
.screen-small .open::after {
  width: 6px;
  height: 3px;
}
.screen-small .active::after {
  width: 16px;
  height: 3px;
}
.app-badge {
  position: absolute;
  top: 4px;
  right: 4px;
  width: 20px;
  height: 20px;
}
.screen-small .app-badge {
  width: 16px;
  height: 16px;
}
.tray {
  display: flex;
  align-items: center;
  justify-content: flex-end;
  padding-right: 28px;
  color: #fff;
  font-size: 14px;
  line-height: 22px;
}
.screen-small .tray {
  padding-right: 20px;
  font-size: 12px;
  line-height: 16px;
}
.clock {
  text-align: right;
}
.language {
  margin: 0 18px 0 20px;
  text-align: center;
}
.system {
  display: flex;
  gap: 8px;
  margin-right: 16px;
}
.count {
  width: 16px;
  height: 16px;
  margin-left: 11px;
  border-radius: 8px;
  background: #4cc2ff;
  color: #1c1c1c;
  font-size: 10px;
  text-align: center;
}
</style>
